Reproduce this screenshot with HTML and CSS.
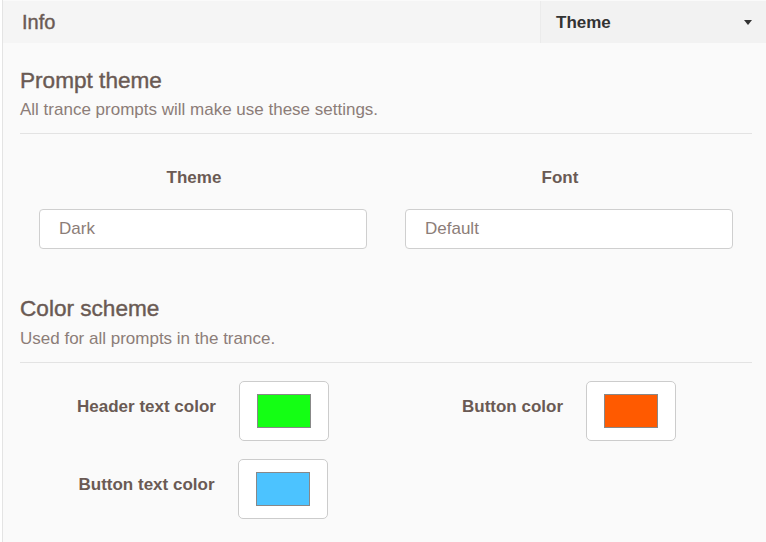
FILE: index.html
```html
<!DOCTYPE html>
<html lang="en">
<head>
    <meta charset="UTF-8">
    <meta name="viewport" content="width=device-width, initial-scale=1.0">
    <title>Trance settings</title>
    <link rel="stylesheet" href="styles.css">
</head>
<body>
    <div class="page">
        <div class="topbar">
            <div class="topbar-title">Info</div>
            <div class="topbar-menu">
                <span>Theme</span>
                <span class="caret"></span>
            </div>
        </div>

        <div class="content">
            <div class="section">
                <h2>Prompt theme</h2>
                <p class="hint">All trance prompts will make use these settings.</p>
                <hr>
                <div class="field-grid">
                    <div class="field">
                        <label>Theme</label>
                        <input type="text" value="Dark">
                    </div>
                    <div class="field">
                        <label>Font</label>
                        <input type="text" value="Default">
                    </div>
                </div>
            </div>

            <div class="section section-colors">
                <h2>Color scheme</h2>
                <p class="hint">Used for all prompts in the trance.</p>
                <hr>
                <div class="color-grid">
                    <div class="color-item">
                        <span class="color-label">Header text color</span>
                        <div class="color-box"><div class="swatch" style="background: #14ff14;"></div></div>
                    </div>
                    <div class="color-item">
                        <span class="color-label">Button color</span>
                        <div class="color-box"><div class="swatch" style="background: #ff5a00;"></div></div>
                    </div>
                    <div class="color-item">
                        <span class="color-label">Button text color</span>
                        <div class="color-box"><div class="swatch" style="background: #4cc3ff;"></div></div>
                    </div>
                </div>
            </div>
        </div>
    </div>
</body>
</html>
```

FILE: styles.css
```css
html, body {
    margin: 0;
    padding: 0;
    background: #ffffff;
}

body {
    font-family: "Liberation Sans", Arial, sans-serif;
    color: #6e5e58;
}

.page {
    margin-left: 2px;
    border-left: 1px solid #e4e4e4;
    background: #fafafa;
    min-height: 542px;
    box-sizing: border-box;
    padding-top: 1px;
}

.topbar {
    display: flex;
    height: 42px;
    background: #f5f5f5;
}

.topbar-title {
    flex: 1;
    padding-left: 19px;
    font-size: 20px;
    line-height: 42px;
    color: #6a5a54;
    -webkit-text-stroke: 0.4px #6a5a54;
}

.topbar-menu {
    width: 226px;
    display: flex;
    align-items: center;
    justify-content: space-between;
    padding: 1px 14px 0 15px;
    box-sizing: border-box;
    background: #f2f2f2;
    border-left: 1px solid #ebebeb;
    font-size: 17px;
    font-weight: bold;
    color: #333333;
}

.caret {
    width: 0;
    height: 0;
    border-left: 4px solid transparent;
    border-right: 4px solid transparent;
    border-top: 5px solid #333333;
}

.content {
    padding: 0 14px 0 17px;
}

.section h2 {
    margin: 24px 0 0;
    font-size: 22.6px;
    line-height: 27px;
    font-weight: normal;
    color: #6a5a54;
    -webkit-text-stroke: 0.4px #6a5a54;
}

.hint {
    margin: 6px 0 0;
    font-size: 17px;
    line-height: 20px;
    color: #8c7d78;
}

.section hr {
    border: none;
    border-top: 1px solid #e3e3e3;
    margin: 13px 0 0;
}

.field-grid {
    display: grid;
    grid-template-columns: 1fr 1fr;
    margin-top: 34px;
}

.field {
    display: flex;
    flex-direction: column;
    padding: 0 19px;
}

.field label {
    text-align: center;
    font-size: 17px;
    line-height: 20px;
    font-weight: bold;
    padding-right: 18px;
    color: #6a5a54;
}

.field input {
    margin-top: 21px;
    height: 40px;
    box-sizing: border-box;
    border: 1px solid #cfcfcf;
    border-radius: 4px;
    background: #ffffff;
    padding: 0 19px;
    font-family: "Liberation Sans", Arial, sans-serif;
    font-size: 17px;
    color: #8c7d78;
    outline: none;
}

.section-colors h2 {
    margin-top: 46px;
}

.section-colors .hint {
    margin-top: 7px;
}

.section-colors hr {
    margin-top: 13px;
}

.color-grid {
    display: grid;
    grid-template-columns: 1fr 1fr;
    row-gap: 18px;
    margin-top: 18px;
}

.color-item {
    display: flex;
    align-items: center;
    justify-content: center;
    gap: 23px;
}

.color-label {
    font-size: 17px;
    font-weight: bold;
    color: #6a5a54;
    margin-top: -8px;
}

.color-box {
    width: 90px;
    height: 60px;
    box-sizing: border-box;
    border: 1px solid #cccccc;
    border-radius: 5px;
    background: #ffffff;
    display: flex;
    align-items: center;
    justify-content: center;
}

.swatch {
    width: 54px;
    height: 34px;
    box-sizing: border-box;
    border: 1px solid #888888;
}
```
